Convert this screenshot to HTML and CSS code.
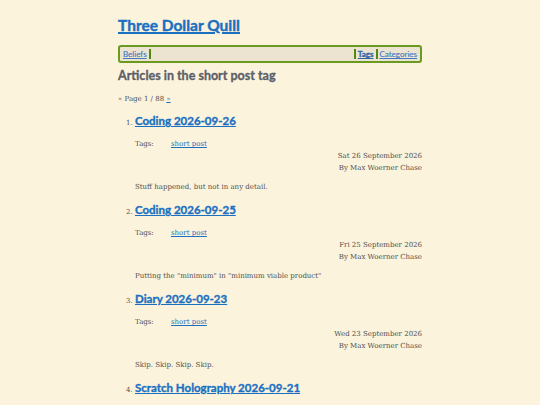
FILE: index.html
```html
<!DOCTYPE html>
<html>
<head>
<meta charset="utf-8">
<link rel="stylesheet" href="styles.css">
<title>Three Dollar Quill</title>
</head>
<body>
<div class="page">
  <h1 class="site-title"><a href="#">Three Dollar Quill</a></h1>
  <nav class="nav">
    <a class="nav-link" href="#">Beliefs</a>
    <span class="sep"></span>
    <span class="spacer"></span>
    <span class="sep"></span>
    <a class="nav-link bold" href="#">Tags</a>
    <span class="sep"></span>
    <a class="nav-link" href="#">Categories</a>
  </nav>
  <h2 class="tag-heading">Articles in the short post tag</h2>
  <p class="pager">« Page 1 / 88 <a href="#">»</a></p>
  <ol class="articles">
    <li class="article">
      <h3 class="article-title"><a href="#">Coding 2026-09-26</a></h3>
      <div class="tags"><span class="tags-label">Tags:</span><a href="#">short post</a></div>
      <div class="meta"><div>Sat 26 September 2026</div><div>By Max Woerner Chase</div></div>
      <p class="summary">Stuff happened, but not in any detail.</p>
    </li>
    <li class="article">
      <h3 class="article-title"><a href="#">Coding 2026-09-25</a></h3>
      <div class="tags"><span class="tags-label">Tags:</span><a href="#">short post</a></div>
      <div class="meta"><div>Fri 25 September 2026</div><div>By Max Woerner Chase</div></div>
      <p class="summary">Putting the "minimum" in "minimum viable product"</p>
    </li>
    <li class="article">
      <h3 class="article-title"><a href="#">Diary 2026-09-23</a></h3>
      <div class="tags"><span class="tags-label">Tags:</span><a href="#">short post</a></div>
      <div class="meta"><div>Wed 23 September 2026</div><div>By Max Woerner Chase</div></div>
      <p class="summary">Skip. Skip. Skip. Skip.</p>
    </li>
    <li class="article">
      <h3 class="article-title"><a href="#">Scratch Holography 2026-09-21</a></h3>
    </li>
  </ol>
</div>
</body>
</html>
```

FILE: styles.css
```css
html, body {
  margin: 0;
  padding: 0;
  background: #fbf3dc;
}
body {
  font-family: "DejaVu Serif", serif;
  color: #4f4f4f;
}
.page {
  width: 304px;
  margin: 0 auto;
  padding-top: 14px;
}
a { color: #1b70c2; }
.site-title {
  font-family: "Lato", "Open Sans", sans-serif;
  font-weight: 700;
  font-size: 15.5px;
  line-height: 22px;
  margin: 0 0 9px 0;
  -webkit-text-stroke: 0.4px currentColor;
}
.site-title a { text-decoration-thickness: 1.5px; }
.nav {
  display: flex;
  align-items: stretch;
  height: 12px;
  border: 2px solid #6a9a1f;
  border-radius: 3px;
  background: #ece4d0;
  padding: 1px 2px;
  font-family: "Lato", "Open Sans", sans-serif;
  font-size: 8px;
  line-height: 12px;
}
.nav-link { padding: 0 1px; color: #3d7cc0; -webkit-text-stroke: 0.15px currentColor; }
.nav-link.bold { font-weight: 700; color: #2a68a8; -webkit-text-stroke: 0.3px currentColor; }
.sep {
  width: 2px;
  background: #4f8a10;
  margin: 1px 1px;
}
.spacer { flex: 1; }
.tag-heading {
  font-family: "Lato", "Open Sans", sans-serif;
  font-weight: 700;
  font-size: 12.5px;
  line-height: 16px;
  color: #5b6068;
  margin: 5px 0 0 0;
  -webkit-text-stroke: 0.3px currentColor;
}
.pager {
  font-size: 7px;
  line-height: 10px;
  margin: 10px 0 0 0;
}
.articles {
  margin: 8px 0 0 0;
  padding-left: 17px;
  font-size: 7px;
}
.article { margin: 0; }
.article::marker { font-size: 7px; color: #555; }
.article-title {
  font-family: "Lato", "Open Sans", sans-serif;
  font-weight: 700;
  font-size: 11.5px;
  line-height: 18px;
  margin: 0;
  -webkit-text-stroke: 0.35px currentColor;
}
.article-title a { text-decoration-thickness: 1.2px; }
.tags {
  display: flex;
  font-size: 7px;
  line-height: 10px;
  margin-top: 9px;
}
.tags-label { width: 36px; }
.meta {
  text-align: right;
  font-size: 7px;
  line-height: 12px;
  margin-top: 1px;
}
.summary {
  font-size: 7px;
  line-height: 10px;
  margin: 8px 0 9px 0;
}
```
